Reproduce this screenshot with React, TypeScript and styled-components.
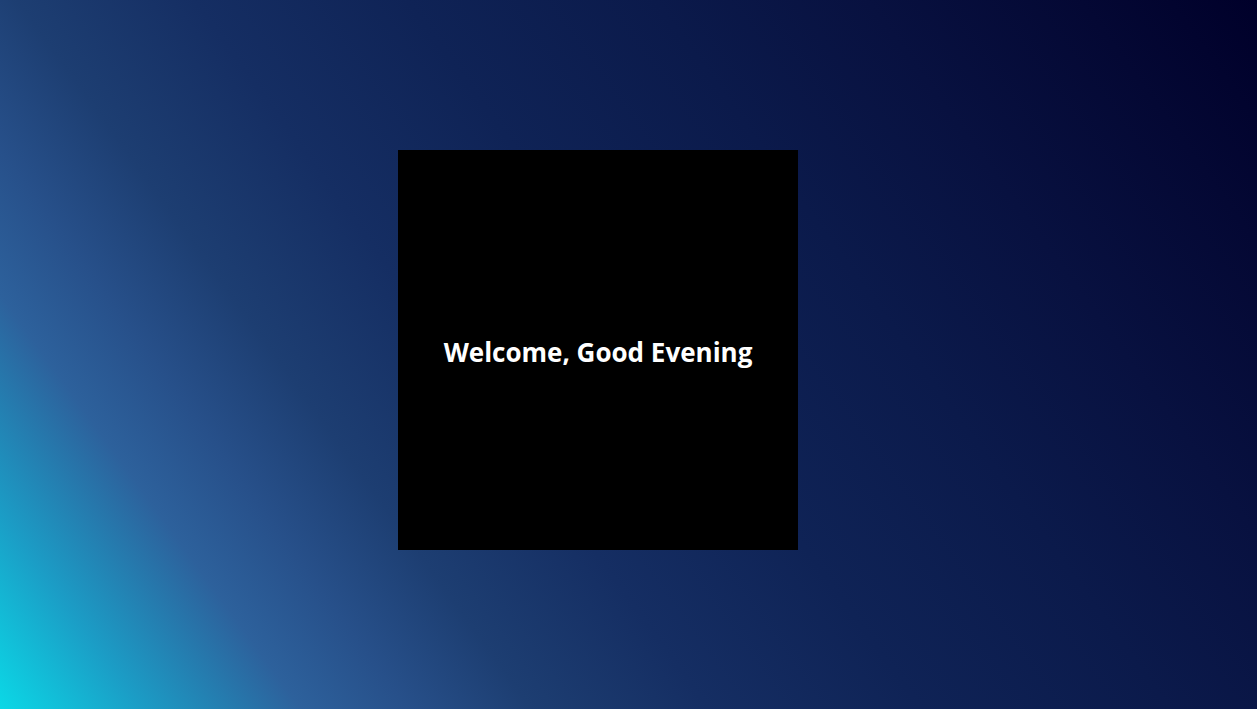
import styled, { createGlobalStyle } from 'styled-components';

const GlobalStyle = createGlobalStyle`
  * {
    box-sizing: border-box;
  }

  html,
  body {
    margin: 0;
    padding: 0;
    height: 100%;
  }

  body {
    font-family: 'Open Sans', 'Noto Sans', sans-serif;
    background: #0a1644;
  }
`;

const Stage = styled.main`
  height: 100vh;
  display: flex;
  align-items: center;
  justify-content: center;
  padding: 0 61px 9px 0;
  background: linear-gradient(
    54deg,
    #0bd8e6 0%,
    #1b9dc6 8%,
    #2d619c 17%,
    #27508a 23%,
    #1d3e72 30%,
    #152e63 40%,
    #0f2356 52%,
    #0b1a4b 66%,
    #081140 78%,
    #040834 90%,
    #00002a 100%
  );
`;

const Card = styled.section`
  width: 400px;
  height: 400px;
  background: #000;
  display: flex;
  align-items: center;
  justify-content: center;
`;

const Greeting = styled.h1`
  margin: 0 0 -4px;
  color: #fff;
  font-size: 26px;
  font-weight: 700;
  letter-spacing: 0;
`;

export default function App() {
  return (
    <>
      <GlobalStyle />
      <Stage>
        <Card>
          <Greeting>Welcome, Good Evening</Greeting>
        </Card>
      </Stage>
    </>
  );
}
